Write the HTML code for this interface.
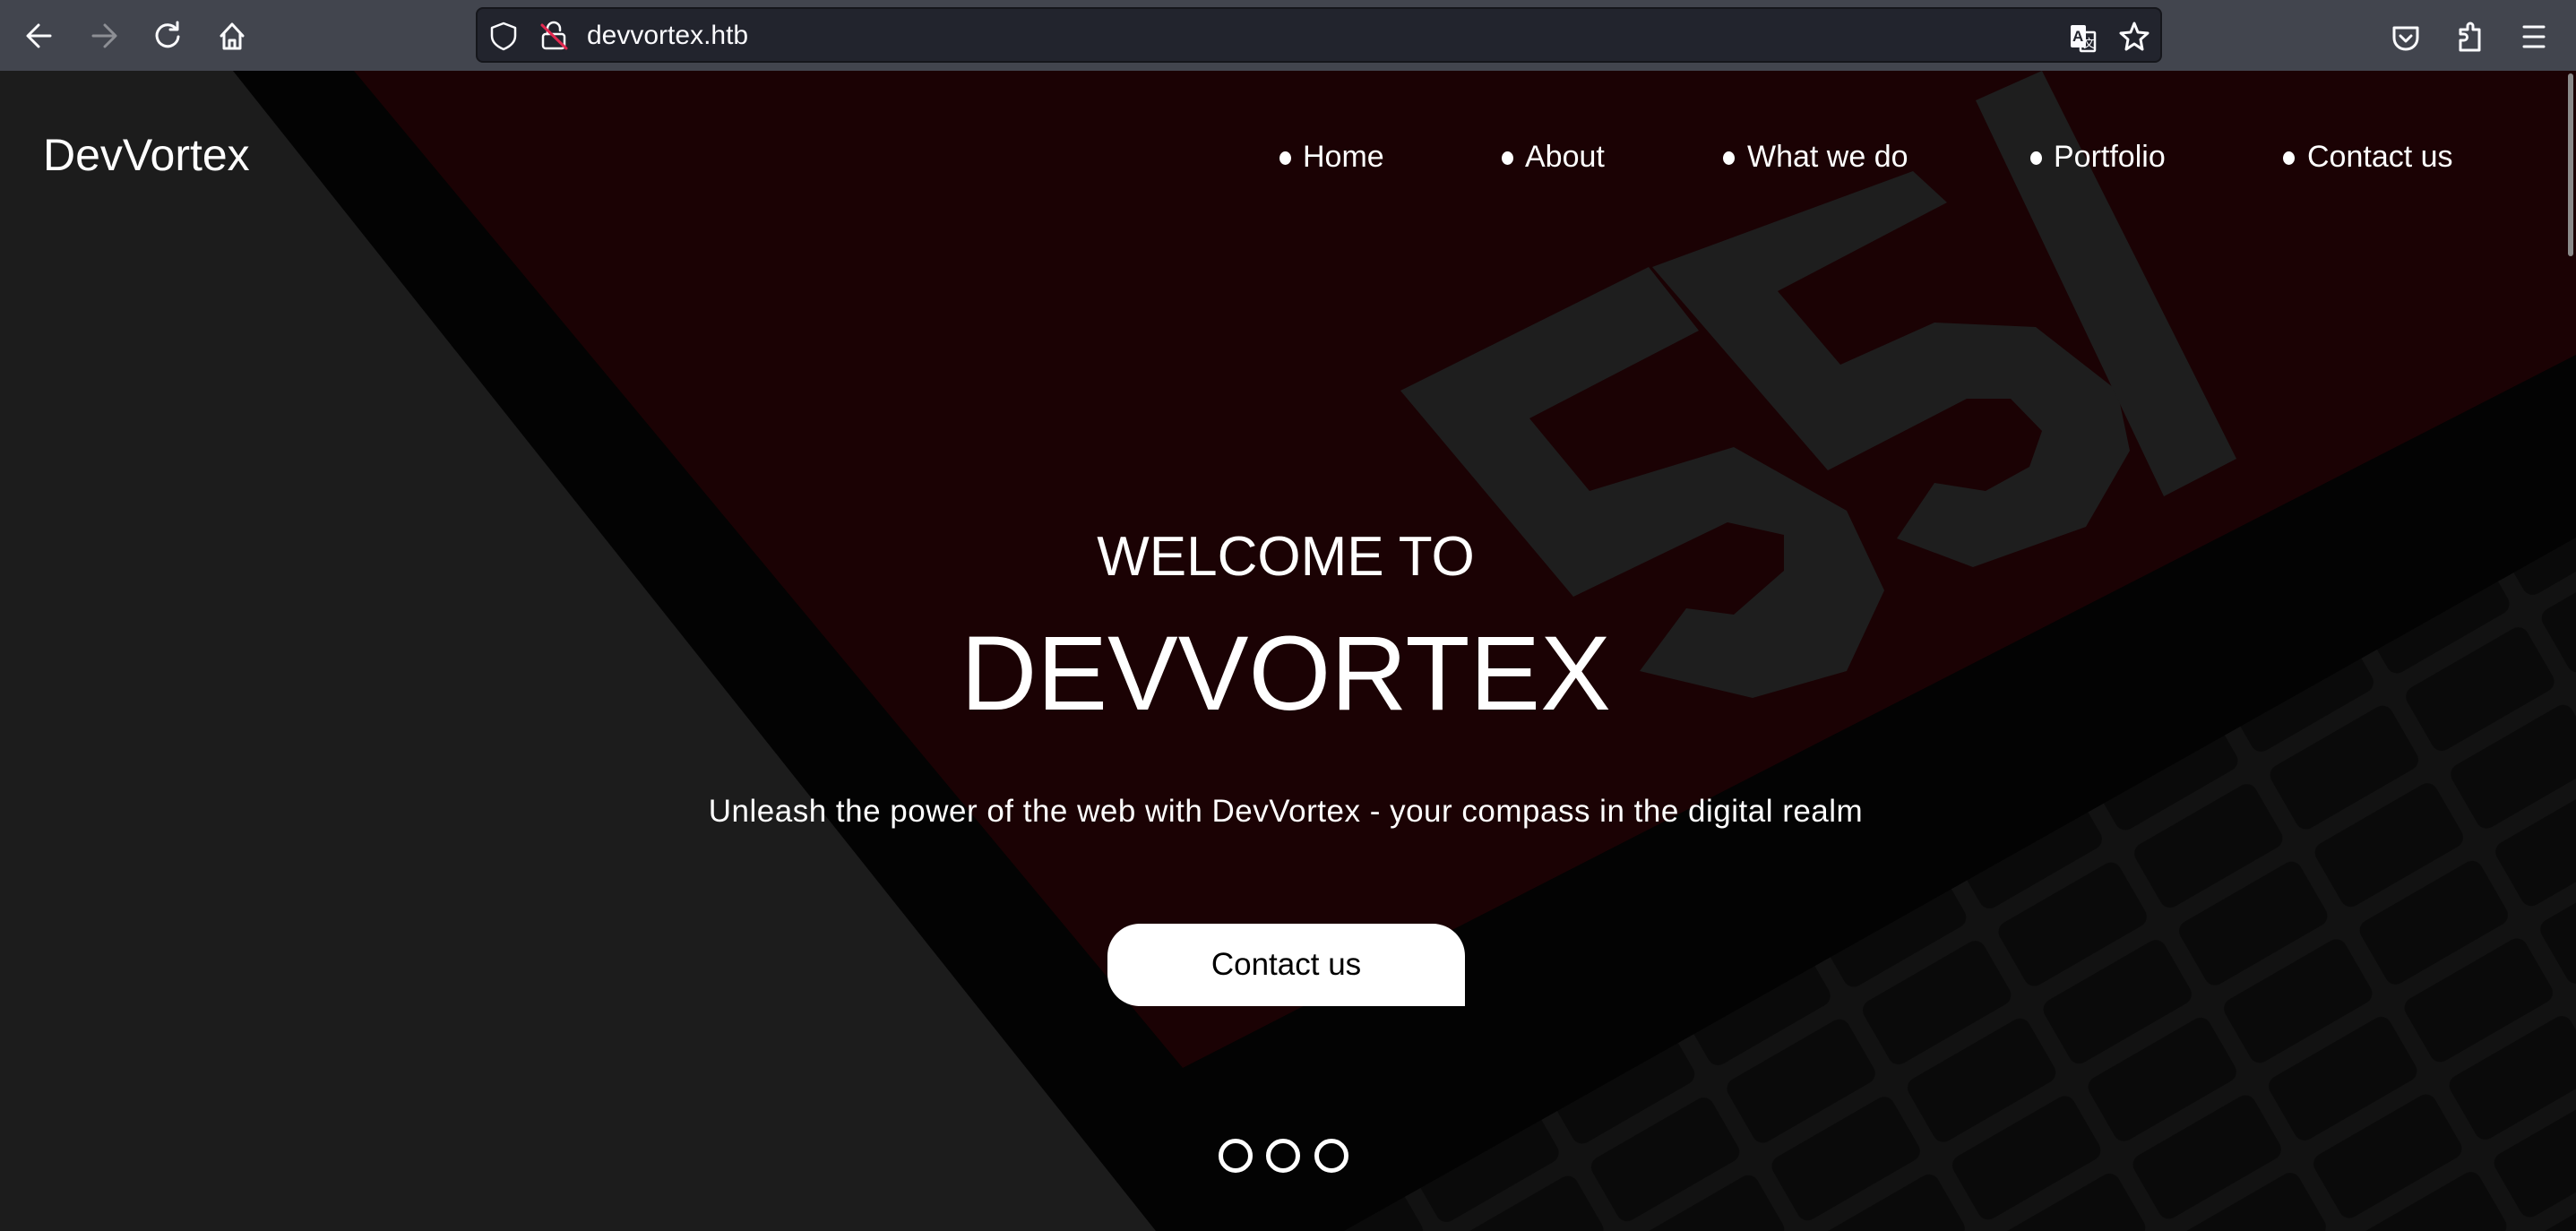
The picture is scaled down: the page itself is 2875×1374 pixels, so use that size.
<!DOCTYPE html>
<html><head><meta charset="utf-8">
<style>
html,body{margin:0;padding:0;width:2875px;height:1374px;overflow:hidden;background:#000;font-family:"Liberation Sans",sans-serif;}
#tb{position:absolute;left:0;top:0;width:2875px;height:79px;background:#42454e;}
#url{position:absolute;left:531px;top:8px;width:1882px;height:62px;background:#22242d;border:2px solid #15161b;border-radius:8px;box-sizing:border-box;}
#urltext{position:absolute;left:655px;top:23px;font-size:30px;line-height:34px;color:#fbfbfe;}
.ic{position:absolute;}
#hero{position:absolute;left:0;top:79px;width:2875px;height:1295px;overflow:hidden;}
.t{position:absolute;color:#fff;white-space:nowrap;}
.nav{font-size:34px;top:156px;}
.dot{position:absolute;top:169px;width:13px;height:15px;border-radius:50%;background:#fff;}
.c{position:absolute;top:1271px;width:38px;height:38px;border:5px solid #fff;border-radius:50%;box-sizing:border-box;}
</style></head><body>
<div id="tb">
<div id="url"></div>
<svg class="ic" style="left:0;top:0" width="2875" height="79" fill="none" stroke-linecap="round" stroke-linejoin="round">
 <g stroke="#fbfbfe" stroke-width="3">
  <path d="M56 40H32M43 28L31 40L43 52"/>
  <path d="M197 33A12 12 0 1 0 199 41"/><path d="M198 25V33H190"/>
  <path d="M247 40L259 27L271 40M250 37V54H268V37M256 54V45H262V54"/>
  <path d="M562 26L575 31V40C575 47 569 52 562 55C555 52 549 47 549 40V31Z" stroke-width="2.5"/>
  <rect x="606" y="38" width="24" height="16" rx="3" stroke-width="2.5"/><path d="M611 38V32A7 7 0 0 1 625 32V34" stroke-width="2.5"/>
 </g>
 <g stroke="#8d8f95" stroke-width="3"><path d="M104 40H128M117 28L129 40L117 52"/></g>
 <path d="M605 28L632 54" stroke="#e22850" stroke-width="3"/>
 <g stroke="#fbfbfe" stroke-width="3">
  <path d="M2382 26L2386 36L2397 37L2389 44L2391 55L2382 49L2373 55L2375 44L2367 37L2378 36Z"/>
  <path d="M2672 31H2698V42C2698 50 2692 55 2685 55C2678 55 2672 50 2672 42Z"/><path d="M2679 40L2685 46L2691 40"/>
  <path d="M2746 56V45H2750A3 3 0 0 0 2750 38H2746V33H2754V29A3 3 0 0 1 2760 29V33H2767V56Z"/>
  <path d="M2817 30H2839M2817 41H2839M2817 52H2839"/>
 </g>
 <rect x="2311" y="28" width="17" height="25" rx="2" fill="#fbfbfe"/>
 <rect x="2322" y="36" width="16" height="21" rx="1" fill="none" stroke="#fbfbfe" stroke-width="2.5"/>
 <text x="2313" y="46" font-size="17" font-weight="bold" fill="#22242d" font-family="Liberation Sans">A</text>
 <text x="2325" y="53" font-size="13" fill="#fbfbfe" font-family="Noto Sans CJK SC">文</text>
</svg>
<div id="urltext" class="t">devvortex.htb</div>
</div>
<div id="hero">
<svg width="2875" height="1295" viewBox="0 79 2875 1295" style="position:absolute;left:0;top:0">
 <defs>
  <pattern id="keys" width="175" height="100" patternUnits="userSpaceOnUse" patternTransform="rotate(-30)">
   <rect x="0" y="0" width="175" height="100" fill="#121212"/>
   <rect x="10" y="10" width="155" height="80" rx="12" fill="#0a0a0a"/>
  </pattern>
  <clipPath id="deck"><polygon points="1500,1374 2875,600 2875,1374"/></clipPath>
 </defs>
 <rect x="0" y="79" width="2875" height="1295" fill="#1c1c1c"/>
 <polygon points="260,79 2875,79 2875,1374 1290,1374" fill="#030303"/>
 <polygon points="395,79 2875,79 2875,396 1320,1192" fill="#1b0204"/>
 <g clip-path="url(#deck)"><rect x="1400" y="500" width="1500" height="900" fill="url(#keys)"/></g>
 <g fill="#1e1e1e">
  <polygon points="1563,436 1840,298 1896,369 1707,467 1774,548 1935,499 2061,570 2103,659 2061,749 1956,779 1830,749 1882,679 1935,686 1991,637 1991,597 1928,583 1756,666"/>
  <polygon points="1844,298 2135,191 2173,226 1984,325 2054,407 2159,360 2272,365 2363,436 2377,503 2328,588 2202,633 2117,601 2159,539 2216,548 2265,521 2279,481 2244,445 2195,445 2040,525"/>
  <polygon points="2205,112 2279,79 2496,512 2415,554"/>
 </g>
</svg>
<div class="t" style="left:48px;top:65px;font-size:50px;">DevVortex</div>
</div>
<div class="dot" style="left:1428px"></div><div class="t nav" style="left:1454px">Home</div>
<div class="dot" style="left:1676px"></div><div class="t nav" style="left:1702px">About</div>
<div class="dot" style="left:1923px"></div><div class="t nav" style="left:1950px">What we do</div>
<div class="dot" style="left:2266px"></div><div class="t nav" style="left:2292px">Portfolio</div>
<div class="dot" style="left:2548px"></div><div class="t nav" style="left:2575px">Contact us</div>
<div class="t" style="left:0;width:2870px;text-align:center;top:586px;font-size:62px;">WELCOME TO</div>
<div class="t" style="left:0;width:2870px;text-align:center;top:684px;font-size:118px;">DEVVORTEX</div>
<div class="t" style="left:0;width:2870px;text-align:center;top:886px;font-size:35px;letter-spacing:0.5px;">Unleash the power of the web with DevVortex - your compass in the digital realm</div>
<div style="position:absolute;left:1236px;top:1031px;width:399px;height:92px;background:#fff;border-radius:36px 36px 0 36px;"></div>
<div class="t" style="left:1236px;width:399px;text-align:center;top:1057px;font-size:35px;color:#000;">Contact us</div>
<div class="c" style="left:1360px"></div><div class="c" style="left:1413px"></div><div class="c" style="left:1467px"></div>
<div style="position:absolute;left:2866px;top:82px;width:6px;height:204px;background:#8a8a8a;border-radius:3px;"></div>
</body></html>
